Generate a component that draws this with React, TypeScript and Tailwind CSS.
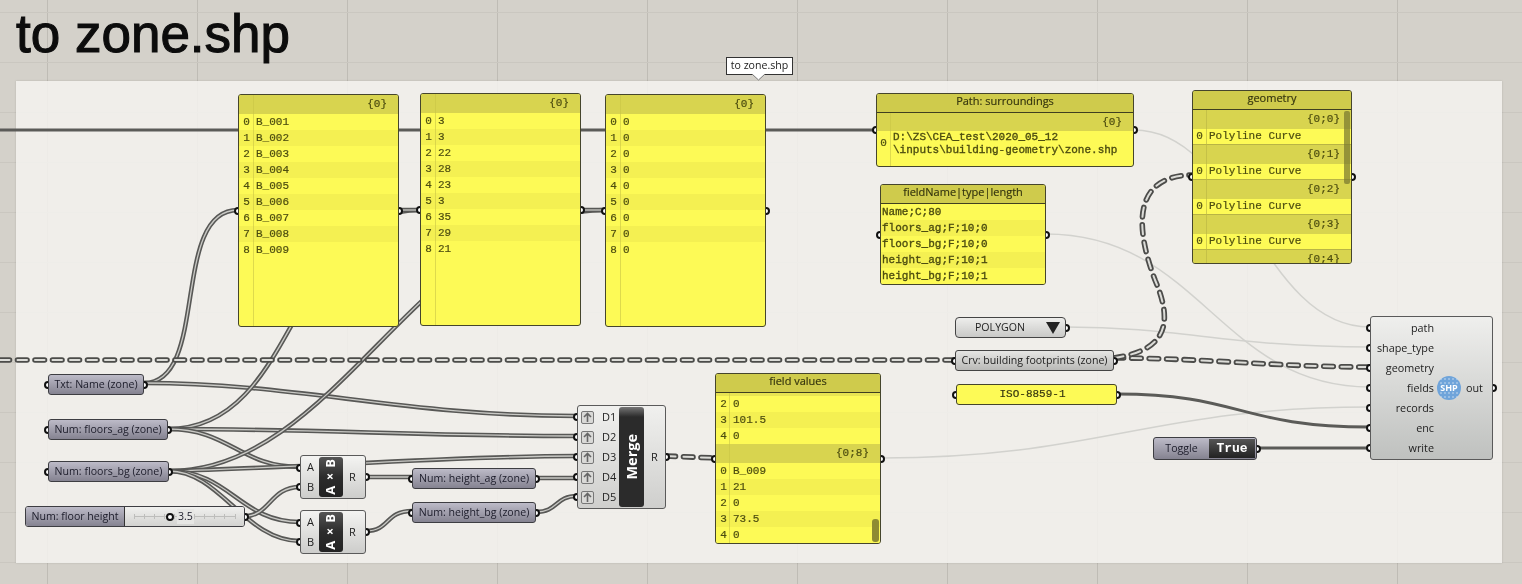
import type { ReactNode } from "react";

const SANS = "font-['Open_Sans','Noto_Sans',sans-serif]";
const MONO = "font-['Liberation_Mono','Courier_New',monospace] [-webkit-text-stroke:0.2px_#4d4d10]";

const listWires = [
  "M144 383C210 383 170 210 238 210",
  "M144 383C300 383 400 416 577 416",
  "M168 429C300 429 290 210 420 210",
  "M168 429C320 429 420 436 577 436",
  "M168 429C230 429 240 467 300 467",
  "M169 471C340 471 420 210 605 210",
  "M169 471C300 468 450 456 577 456",
  "M169 471C230 471 240 522 300 522",
  "M169 471C220 471 245 541 300 541",
  "M245 516C270 516 270 487 300 487",
  "M399 210H420",
  "M581 210H605",
  "M366 477H412",
  "M536 478H577",
  "M366 531C390 531 385 511 412 511",
  "M536 512C558 512 555 496 577 496",
];
const solidWires = [
  "M0 130H876",
  "M1117 394C1240 394 1240 427 1370 427",
  "M1257 448H1370",
];
const faintWires = [
  "M881 458C1100 458 1150 407 1370 407",
  "M1134 130C1240 130 1260 327 1370 327",
  "M1046 234C1200 234 1220 387 1370 387",
  "M1066 327C1180 327 1230 347 1370 347",
];
const treeWires = [
  "M0 360H955",
  "M1114 358C1200 358 1280 367 1370 367",
  "M1114 358C1170 350 1172 320 1155 280C1138 235 1128 176 1192 175",
  "M666 456L715 458",
];

function Wires() {
  return (
    <svg className="absolute inset-0" width={1522} height={584} fill="none">
      {faintWires.map((d) => (
        <path key={d} d={d} stroke="#d2d2ce" strokeWidth={1.5} />
      ))}
      {listWires.map((d) => (
        <g key={d}>
          <path d={d} stroke="#585856" strokeWidth={4.5} />
          <path d={d} stroke="#c9c9c5" strokeWidth={1.3} />
        </g>
      ))}
      {solidWires.map((d) => (
        <path key={d} d={d} stroke="#5b5b58" strokeWidth={3} />
      ))}
      {treeWires.map((d) => (
        <g key={d} strokeLinecap="round" strokeDasharray="9.5 8">
          <path d={d} stroke="#4c4c4a" strokeWidth={5.6} />
          <path d={d} stroke="#dcdcd8" strokeWidth={2} />
        </g>
      ))}
    </svg>
  );
}

function Dot() {
  return <span className="block w-[8px] h-[8px] rounded-full border-2 border-[#111] bg-white" />;
}

// ports sit behind the node body, so only the outer half of the ring shows
function Ports({ side, count = 1, gap = "gap-0" }: { side: "in" | "out"; count?: number; gap?: string }) {
  return (
    <div className={`absolute inset-y-0 flex flex-col justify-center ${gap} ${side === "in" ? "left-[-4px]" : "right-[-4px]"}`}>
      {Array.from({ length: count }, (_, i) => (
        <Dot key={i} />
      ))}
    </div>
  );
}

function Rows({ rows, first = 0, indexed = true, cls = "" }: { rows: string[]; first?: number; indexed?: boolean; cls?: string }) {
  return (
    <>
      {rows.map((text, i) => (
        <div key={i} className={`flex h-[16px] items-center text-[11px] text-[#4d4d10] ${i % 2 === 0 ? "bg-[#fdfa56]" : "bg-[#f4f052]"} ${cls}`}>
          {indexed && <span className="w-[15px] shrink-0 text-center">{first + i}</span>}
          <span className={indexed ? "pl-[2px]" : "pl-[1px]"}>{text}</span>
        </div>
      ))}
    </>
  );
}

function TreeHead({ label, className = "h-[19px]" }: { label: string; className?: string }) {
  return (
    <div className={`flex items-center justify-end pr-[11px] bg-[#d8d44f] text-[11px] text-[#4d4d10] ${className}`}>{label}</div>
  );
}

function PanelTitle({ title }: { title: string }) {
  return (
    <div className={`h-[19px] pb-[3px] flex items-center justify-center border-b border-[#3f3f20] bg-[#cfcb4c] text-[11px] text-[#2e2e10] ${SANS}`}>
      {title}
    </div>
  );
}

function ListPanel({ className, rows }: { className: string; rows: string[] }) {
  return (
    <div className={`absolute ${className}`}>
      <Ports side="in" />
      <Ports side="out" />
      <div className={`relative h-full overflow-hidden rounded-[3px] border border-[#45452c] bg-[#fdfa56] ${MONO}`}>
        <TreeHead label="{0}" />
        <Rows rows={rows} />
        <span className="absolute left-[14px] top-0 bottom-0 w-px bg-[#c9c546]/60" />
      </div>
    </div>
  );
}

function Param({ className, children }: { className: string; children: ReactNode }) {
  return (
    <div className={`absolute h-[21px] ${className}`}>
      <Ports side="in" />
      <Ports side="out" />
      <div className={`relative h-full flex items-center justify-center rounded-[3px] border border-[#3d3d42] bg-gradient-to-b from-[#bdbbc8] to-[#858391] text-[10.6px] text-[#1c1c2a] whitespace-nowrap ${SANS}`}>
        {children}
      </div>
    </div>
  );
}

function Multiply({ className }: { className: string }) {
  return (
    <div className={`absolute w-[66px] h-[44px] ${className}`}>
      <Ports side="in" count={2} gap="gap-[11px]" />
      <Ports side="out" />
      <div className={`relative h-full flex items-center rounded-[3px] border border-[#5a5a5a] bg-gradient-to-b from-[#f4f4f2] to-[#cdcdcb] text-[11px] text-[#222] ${SANS}`}>
        <div className="w-[18px] flex flex-col gap-[4px] pl-[6px]">
          <span>A</span>
          <span>B</span>
        </div>
        <div className="w-[24px] h-[40px] flex items-center justify-center rounded-[3px] bg-gradient-to-b from-[#555] via-[#2c2c2c] to-[#222]">
          <span className="[writing-mode:vertical-rl] rotate-180 text-[13px] font-bold text-white">A×B</span>
        </div>
        <span className="pl-[6px]">R</span>
      </div>
    </div>
  );
}

function MergeNode() {
  return (
    <div className="absolute left-[577px] top-[405px] w-[89px] h-[104px]">
      <Ports side="in" count={5} gap="gap-[12px]" />
      <Ports side="out" />
      <div className={`relative h-full flex items-center rounded-[3px] border border-[#5a5a5a] bg-gradient-to-b from-[#f0f0ee] to-[#cfcfcd] text-[11px] text-[#222] ${SANS}`}>
        <div className="w-[41px] flex flex-col pl-[3px]">
          {["D1", "D2", "D3", "D4", "D5"].map((d) => (
            <div key={d} className="h-[20px] flex items-center gap-[8px]">
              <span className="w-[13px] h-[13px] flex items-center justify-center rounded-[2px] border border-[#777] bg-[#d9d9d7]">
                <svg width="9" height="10" viewBox="0 0 9 10" fill="none" stroke="#666" strokeWidth="1.6">
                  <path d="M4.5 10V1.5M1 5l3.5-3.5L8 5" />
                </svg>
              </span>
              <span>{d}</span>
            </div>
          ))}
        </div>
        <div className="w-[25px] h-[100px] flex items-center justify-center rounded-[3px] bg-gradient-to-b from-[#777] from-0% via-[#2b2b2b] via-[10%] to-[#2b2b2b]">
          <span className="[writing-mode:vertical-rl] rotate-180 text-[14.5px] font-bold text-white">Merge</span>
        </div>
        <span className="pl-[7px]">R</span>
      </div>
    </div>
  );
}

function Slider() {
  return (
    <div className="absolute left-[25px] top-[506px] w-[220px] h-[21px]">
      <Ports side="out" />
      <div className={`relative h-full flex rounded-[3px] border border-[#3d3d42] overflow-hidden text-[10.6px] text-[#1c1c2a] ${SANS}`}>
        <div className="w-[99px] flex items-center justify-center border-r border-[#333] bg-gradient-to-b from-[#bdbbc8] to-[#858391]">
          Num: floor height
        </div>
        <div className="relative flex-1 flex items-center gap-[3px] pl-[41px] bg-gradient-to-b from-[#f0f0ee] to-[#d3d3d1]">
          <svg className="absolute left-[9px] top-[6px]" width="102" height="7" fill="none" stroke="#bdbdbb">
            <path d="M0 3.5H102" />
            {[0, 10, 20, 30, 40, 50, 60, 70, 80, 90, 101].map((x) => (
              <path key={x} d={`M${x + 0.5} 1V6`} />
            ))}
          </svg>
          <span className="relative"><Dot /></span>
          <span className="relative px-px bg-[#e6e6e4]">3.5</span>
        </div>
      </div>
    </div>
  );
}

function ShapeNode() {
  const inputs = ["path", "shape_type", "geometry", "fields", "records", "enc", "write"];
  return (
    <div className="absolute left-[1370px] top-[316px] w-[123px] h-[144px]">
      <Ports side="in" count={7} gap="gap-[12px]" />
      <Ports side="out" />
      <div className={`relative h-full flex items-center rounded-[3px] border border-[#5a5a5a] bg-gradient-to-b from-[#efefed] to-[#bfc1bf] text-[10.8px] text-[#222] ${SANS}`}>
        <div className="w-[63px] flex flex-col items-end">
          {inputs.map((s) => (
            <div key={s} className="h-[20px] flex items-center whitespace-nowrap">{s}</div>
          ))}
        </div>
        <div className="relative ml-[3px] w-[24px] h-[24px] rounded-full bg-[#6fa4da] flex items-center justify-center">
          <svg className="absolute inset-0" width="24" height="24" fill="#cfe0f2">
            {[5, 9, 13, 17, 21].map((x) => [3, 7, 17, 21].map((y) => <circle key={`${x}-${y}`} cx={x - 1} cy={y} r={0.8} />))}
          </svg>
          <span className="relative text-[9px] font-bold text-white">SHP</span>
        </div>
        <span className="pl-[5px]">out</span>
      </div>
    </div>
  );
}

function GeometryPanel() {
  return (
    <div className="absolute left-[1192px] top-[90px] w-[160px] h-[174px]">
      <Ports side="in" />
      <Ports side="out" />
      <div className={`relative h-full overflow-hidden rounded-[3px] border border-[#45452c] bg-[#d8d44f] ${MONO}`}>
        <PanelTitle title="geometry" />
        {["{0;0}", "{0;1}", "{0;2}", "{0;3}"].map((label) => (
          <div key={label}>
            <TreeHead label={label} />
            <div className="flex h-[16px] items-center bg-[#fdfa56] border-b border-[#b8b445] text-[11px] text-[#4d4d10]">
              <span className="w-[13px] shrink-0 text-center">0</span>
              <span className="pl-[3px]">Polyline Curve</span>
            </div>
          </div>
        ))}
        <TreeHead label="{0;4}" />
        <span className="absolute right-[1px] top-[20px] w-[6px] h-[73px] rounded-[2px] bg-[#77762f]/70" />
        <span className="absolute left-[13px] top-[19px] bottom-0 w-px bg-[#bdb944]/70" />
      </div>
    </div>
  );
}

function FieldValues() {
  return (
    <div className="absolute left-[715px] top-[373px] w-[166px] h-[171px]">
      <Ports side="in" />
      <Ports side="out" />
      <div className={`relative h-full overflow-hidden rounded-[3px] border border-[#45452c] bg-[#fdfa56] ${MONO}`}>
        <PanelTitle title="field values" />
        <div className="h-[3px] bg-[#e8e452]" />
        <Rows rows={["0", "101.5", "0"]} first={2} />
        <TreeHead label="{0;8}" />
        <Rows rows={["B_009", "21", "0", "73.5", "0"]} />
        <span className="absolute left-[13px] top-[19px] bottom-0 w-px bg-[#c9c546]/60" />
        <span className="absolute right-[1px] top-[145px] w-[7px] h-[23px] rounded-[3px] bg-[#8e8b32]" />
      </div>
    </div>
  );
}

function PathPanel() {
  return (
    <div className="absolute left-[876px] top-[93px] w-[258px] h-[74px]">
      <Ports side="in" />
      <Ports side="out" />
      <div className={`relative h-full overflow-hidden rounded-[3px] border border-[#45452c] bg-[#fdfa56] ${MONO}`}>
        <PanelTitle title="Path: surroundings" />
        <TreeHead label="{0}" className="h-[18px]" />
        <div className="flex items-start text-[11px] leading-[13px] text-[#4d4d10]">
          <span className="w-[13px] shrink-0 pt-[6px] text-center">0</span>
          <div className="pl-[3px] [-webkit-text-stroke:0.35px_#4d4d10]">
            D:\ZS\CEA_test\2020_05_12
            <br />
            \inputs\building-geometry\zone.shp
          </div>
        </div>
        <span className="absolute left-[13px] top-[19px] bottom-0 w-px bg-[#c9c546]/60" />
      </div>
    </div>
  );
}

function FieldPanel() {
  return (
    <div className="absolute left-[880px] top-[184px] w-[166px] h-[101px]">
      <Ports side="in" />
      <Ports side="out" />
      <div className={`relative h-full overflow-hidden rounded-[3px] border border-[#45452c] bg-[#fdfa56] ${MONO}`}>
        <PanelTitle title="fieldName|type|length" />
        <Rows
          indexed={false}
          cls="[-webkit-text-stroke:0.35px_#4d4d10]"
          rows={["Name;C;80", "floors_ag;F;10;0", "floors_bg;F;10;0", "height_ag;F;10;1", "height_bg;F;10;1"]}
        />
      </div>
    </div>
  );
}

export default function App() {
  const verticals = [47, 197, 347, 497, 647, 797, 947, 1097, 1247, 1397];
  const horizontals = [12, 62, 112, 162, 212, 262, 312, 362, 412, 462, 512, 562];
  return (
    <div className="relative w-[1522px] h-[584px] overflow-hidden bg-[#d4d1ca] blur-[0.35px]">
      {verticals.map((x) => (
        <div key={x} className="absolute top-0 bottom-0 w-px bg-[#bfbcb5]" style={{ left: x }} />
      ))}
      {horizontals.map((y) => (
        <div key={y} className="absolute left-0 right-0 h-px bg-[#cac7c0]" style={{ top: y }} />
      ))}

      <h1 className="absolute left-[16px] top-[3px] font-['Liberation_Sans',Arial,sans-serif] text-[53px] leading-[62px] text-[#0c0c0c] [-webkit-text-stroke:1.1px_#0c0c0c]">
        to zone.shp
      </h1>

      {/* group behind the nodes */}
      <div className="absolute left-[16px] top-[81px] w-[1486px] h-[482px] bg-[#f4f3f0]/85 shadow-[0_0_2px_rgba(0,0,0,0.15)]" />

      <div className={`absolute left-[726px] top-[57px] w-[67px] h-[18px] flex items-center justify-center border border-[#333] bg-white text-[10.6px] text-[#222] ${SANS}`}>
        to zone.shp
      </div>
      <svg className="absolute left-[751px] top-[74px]" width="15" height="7" fill="#fff" stroke="#777">
        <path d="M1 0L7.5 6L14 0" />
      </svg>

      <Wires />

      <ListPanel
        className="left-[238px] top-[94px] w-[161px] h-[233px]"
        rows={["B_001", "B_002", "B_003", "B_004", "B_005", "B_006", "B_007", "B_008", "B_009"]}
      />
      <ListPanel
        className="left-[420px] top-[93px] w-[161px] h-[233px]"
        rows={["3", "3", "22", "28", "23", "3", "35", "29", "21"]}
      />
      <ListPanel
        className="left-[605px] top-[94px] w-[161px] h-[233px]"
        rows={["0", "0", "0", "0", "0", "0", "0", "0", "0"]}
      />
      <PathPanel />
      <FieldPanel />
      <GeometryPanel />
      <FieldValues />

      <Param className="left-[48px] top-[374px] w-[96px]">Txt: Name (zone)</Param>
      <Param className="left-[48px] top-[419px] w-[120px]">Num: floors_ag (zone)</Param>
      <Param className="left-[48px] top-[461px] w-[121px]">Num: floors_bg (zone)</Param>
      <Param className="left-[412px] top-[468px] w-[124px]">Num: height_ag (zone)</Param>
      <Param className="left-[412px] top-[502px] w-[124px]">Num: height_bg (zone)</Param>
      <Slider />
      <Multiply className="left-[300px] top-[455px]" />
      <Multiply className="left-[300px] top-[510px]" />
      <MergeNode />

      <div className="absolute left-[955px] top-[317px] w-[111px] h-[21px]">
        <Ports side="out" />
        <div className={`relative h-full flex items-center justify-between pl-[19px] pr-[5px] rounded-[4px] border border-[#444] bg-gradient-to-b from-[#eeeeec] to-[#c9c9c7] text-[10.6px] text-[#222] ${SANS}`}>
          POLYGON
          <span className="w-0 h-0 border-x-[7px] border-x-transparent border-t-[12px] border-t-[#222]" />
        </div>
      </div>
      <div className="absolute left-[955px] top-[350px] w-[159px] h-[21px]">
        <Ports side="in" />
        <Ports side="out" />
        <div className={`relative h-full flex items-center justify-center rounded-[3px] border border-[#444] bg-gradient-to-b from-[#e6e6e4] to-[#b9b9b7] text-[10.6px] text-[#1c1c1c] whitespace-nowrap ${SANS}`}>
          Crv: building footprints (zone)
        </div>
      </div>
      <div className="absolute left-[956px] top-[384px] w-[161px] h-[21px]">
        <Ports side="in" />
        <Ports side="out" />
        <div className={`relative h-full flex items-center justify-center pr-[8px] rounded-[3px] border border-[#45452c] bg-[#fdfa56] text-[11px] text-[#2e2e10] ${MONO}`}>
          ISO-8859-1
        </div>
      </div>
      <div className="absolute left-[1153px] top-[437px] w-[104px] h-[23px]">
        <Ports side="out" />
        <div className="relative h-full flex items-center rounded-[3px] border border-[#3d3d42] overflow-hidden bg-gradient-to-b from-[#bdbbc8] to-[#858391]">
          <span className={`w-[55px] text-center text-[10.6px] text-[#1c1c2a] ${SANS}`}>Toggle</span>
          <span className="flex-1 h-[19px] mr-[1px] flex items-center justify-center bg-gradient-to-b from-[#555] to-[#222] font-['Liberation_Mono',monospace] text-[13px] font-bold text-white">
            True
          </span>
        </div>
      </div>
      <ShapeNode />
    </div>
  );
}
